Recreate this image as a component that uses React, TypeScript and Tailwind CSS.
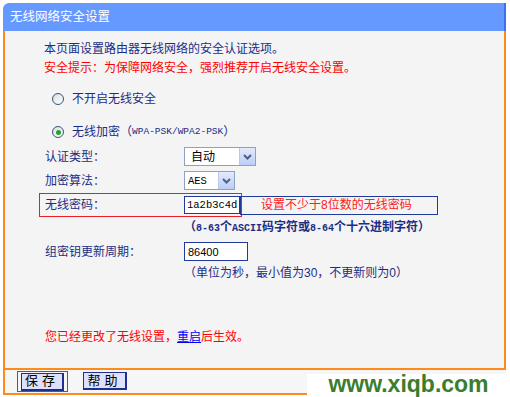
import React from 'react';

function Radio({ checked }: { checked?: boolean }) {
  return (
    <span className="flex h-[12px] w-[12px] shrink-0 items-center justify-center rounded-full border border-[#34557a] bg-gradient-to-br from-[#d9dde2] to-white">
      {checked && <span className="h-[5px] w-[5px] rounded-full bg-[#21a32a]" />}
    </span>
  );
}

function DropButton() {
  return (
    <span className="flex h-full w-[16px] items-center justify-center border-l border-[#b7c8ec] bg-gradient-to-b from-[#e3eafd] to-[#bccdf6]">
      <svg width="9" height="6" viewBox="0 0 9 6">
        <polyline points="1,1 4.5,4.5 8,1" fill="none" stroke="#4b5f8a" strokeWidth="2" />
      </svg>
    </span>
  );
}

const mono = "font-['Liberation_Mono',monospace]";

export default function App() {
  return (
    <div className="relative h-[397px] w-[510px] overflow-hidden bg-white pl-[3px] pt-[3px] font-['Liberation_Sans','Noto_Sans_CJK_SC',sans-serif] text-[12px] leading-[18px]">
      <div className="w-[503px]">
        {/* Title bar */}
        <div className="flex h-[28px] items-center rounded-tl-[6px] border-r-2 border-[#3e6ff0] bg-[#6699ff] pl-[7px] text-[12.5px] text-white">
          无线网络安全设置
        </div>

        {/* Body */}
        <div className="flex h-[339px] flex-col border-x-2 border-b-2 border-[#ff8a1c] bg-[#f4f4f4] pl-[34px] pt-[9px] text-[#1b2d85]">
          <div className="h-[18px] pl-[5px]">本页面设置路由器无线网络的安全认证选项。</div>
          <div className="mt-[1px] h-[18px] pl-[5px] text-[#ff0000]">
            安全提示：为保障网络安全，强烈推荐开启无线安全设置。
          </div>

          <div className="mt-[13px] flex h-[18px] items-center pl-[13px]">
            <Radio />
            <span className="ml-[8px]">不开启无线安全</span>
          </div>
          <div className="mt-[15px] flex h-[18px] items-center pl-[13px]">
            <Radio checked />
            <span className="ml-[8px]">无线加密</span>
            <span>（</span>
            <span className={`${mono} text-[9.5px]`}>WPA-PSK/WPA2-PSK</span>
            <span>）</span>
          </div>

          <div className="mt-[6px] flex h-[19px] items-center">
            <span className="w-[145px] pl-[6px]">认证类型：</span>
            <div className="flex h-[19px] w-[72px] items-center justify-between border border-[#8aa3c0] bg-white pl-[6px] text-black">
              <span>自动</span>
              <DropButton />
            </div>
          </div>
          <div className="mt-[5px] flex h-[19px] items-center">
            <span className="w-[145px] pl-[6px]">加密算法：</span>
            <div className="flex h-[19px] w-[51px] items-center justify-between border border-[#8aa3c0] bg-white pl-[3px] text-black">
              <span className={`${mono} text-[10.5px]`}>AES</span>
              <DropButton />
            </div>
          </div>

          <div className="mt-[3px] flex h-[24px] items-center">
            <div className="flex h-[24px] w-[203px] items-center border border-[#ee1c24]">
              <span className="w-[144px] pl-[5px]">无线密码：</span>
              <div className="flex h-[18px] w-[56px] items-center border border-[#1f3a9a] bg-white pl-[2px] text-black">
                <span className={`${mono} text-[10.5px]`}>1a2b3c4d</span>
              </div>
            </div>
            <div className="-ml-[2px] flex h-[19px] w-[198px] items-center border border-[#1f3a9a] pl-[20px] text-[#ff2020]">
              设置不少于8位数的无线密码
            </div>
          </div>
          <div className="mt-[1px] h-[18px] pl-[145px] font-semibold">
            （<span className={`${mono} text-[10px] font-bold`}>8-63</span>个<span className={`${mono} text-[10px] font-bold`}>ASCII</span>码字符或<span className={`${mono} text-[10px] font-bold`}>8-64</span>个十六进制字符）
          </div>

          <div className="mt-[6px] flex h-[19px] items-center">
            <span className="w-[145px] pl-[6px]">组密钥更新周期：</span>
            <div className="flex h-[19px] w-[64px] items-center border border-[#1f3a9a] bg-white pl-[3px] text-[11px] text-black">
              86400
            </div>
          </div>
          <div className="mt-[3px] h-[18px] pl-[145px]">（单位为秒，最小值为30，不更新则为0）</div>

          <div className="mt-[46px] h-[18px] pl-[6px] text-[#ff0000]">
            您已经更改了无线设置，<span className="text-[#0000ff] underline">重启</span>后生效。
          </div>
        </div>

        {/* Buttons */}
        <div className="flex h-[25px] items-start border-b-2 border-l-2 border-[#ff8a1c] bg-[#f6f6f6] pl-[12px] pt-[1px]">
          <div className="flex h-[21px] w-[51px] items-center justify-center border border-[#ee1c24]">
            <button className="h-[18px] w-[43px] border border-b-2 border-r-2 border-[#1f2f8f] bg-[#dde1fb] text-[13px] leading-[14px] tracking-[4px] text-black">
              保存
            </button>
          </div>
          <button className="ml-[15px] mt-[1px] h-[18px] w-[44px] border border-b-2 border-r-2 border-[#1f2f8f] bg-[#dde1fb] text-[13px] leading-[14px] tracking-[4px] text-black">
            帮助
          </button>
        </div>
      </div>

      {/* Watermark */}
      <div className="absolute left-[307px] top-[374px] flex h-[23px] w-[203px] items-start justify-center bg-white font-['Liberation_Sans',sans-serif] text-[23px] font-bold leading-[21px] text-[#3a7d2c]">
        www.xiqb.com
      </div>
    </div>
  );
}
